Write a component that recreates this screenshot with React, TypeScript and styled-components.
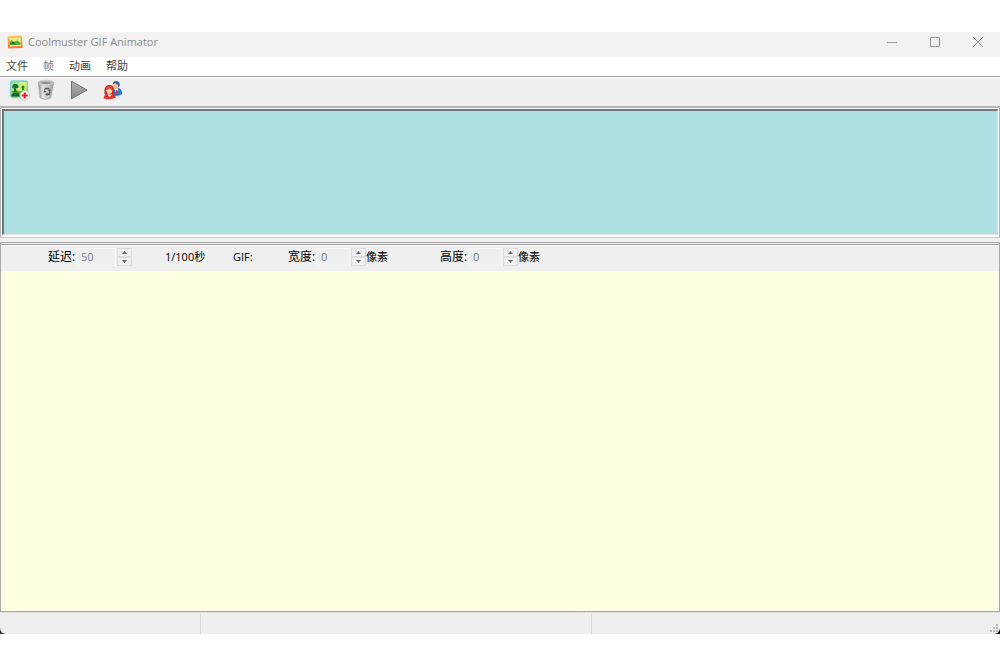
import React from "react";
import styled, { createGlobalStyle } from "styled-components";

const GlobalStyle = createGlobalStyle`
  * { box-sizing: border-box; }
  body {
    margin: 0;
    background: #fff;
    font-family: "Open Sans", "Noto Sans CJK SC", sans-serif;
    font-size: 11px;
    line-height: 16px;
    color: #000;
  }
  button, input { font: inherit; color: inherit; margin: 0; padding: 0; border: 0; background: none; }
`;

const Desktop = styled.div`
  min-height: 100vh;
  padding: 32px 0;
  display: flex;
  flex-direction: column;
`;

const Backdrop = styled.div`
  flex: 1;
  display: flex;
  background: linear-gradient(90deg, #3a3424, #000);
`;

const Window = styled.main`
  flex: 1;
  display: flex;
  flex-direction: column;
  background: #efefef;
  border-radius: 0 0 6px 6px;
  overflow: hidden;
`;

const TitleBar = styled.header`
  height: 25px;
  flex: none;
  display: flex;
  align-items: center;
  justify-content: space-between;
  background: #f2f2f2;
  color: #8c8c8c;
  padding: 0 1px 5px 7px;
`;

const Title = styled.h1`
  display: flex;
  align-items: center;
  gap: 5px;
  margin: 0;
  font-size: 11px;
  font-weight: 400;
`;

const WindowControls = styled.div`
  display: flex;
`;

const ControlButton = styled.button`
  width: 43px;
  height: 20px;
  display: flex;
  align-items: center;
  justify-content: center;
`;

const MenuBar = styled.nav`
  height: 19px;
  flex: none;
  display: flex;
  align-items: center;
  gap: 15px;
  padding: 0 0 2px 6px;
  background: #fff;
`;

const MenuItem = styled.button<{ $muted?: boolean }>`
  color: ${(p) => (p.$muted ? "#77778a" : "#444")};
`;

const ToolBar = styled.div`
  height: 30px;
  flex: none;
  display: flex;
  align-items: center;
  border-top: 1px solid #a0a0a0;
  box-shadow: inset 0 1px #fff;
  padding: 0 0 3px 8px;
`;

const ToolButton = styled.button<{ $gap?: number }>`
  display: flex;
  margin-right: ${(p) => p.$gap ?? 0}px;
`;

const FrameStrip = styled.section`
  height: 132px;
  flex: none;
  display: flex;
  border: 1px solid #b4b4b8;
  border-top-width: 2px;
  border-bottom: 1px solid #cbcbd0;
  background: #fff;
  padding: 1px 1px 2px;
`;

const Frames = styled.div`
  flex: 1;
  background: #addfe3;
  border: 2px solid #6e7677;
  border-right: 1px solid #e3e3e3;
  border-bottom: 1px solid #e3e3e3;
`;

const Editor = styled.section`
  flex: 1;
  display: flex;
  flex-direction: column;
  margin-top: 4px;
  border: 1px solid #a8a8ac;
`;

const Options = styled.form`
  height: 27px;
  flex: none;
  display: flex;
  align-items: center;
  border-top: 1px solid #a0a0a0;
  box-shadow: inset 0 1px #f8f8f8;
  margin-top: 1px;
  padding: 0 0 3px 47px;
`;

const Field = styled.div<{ $width: number }>`
  display: flex;
  align-items: center;
  width: ${(p) => p.$width}px;
`;

const FieldLabel = styled.label`
  width: 28px;
  font-size: 12px;
  white-space: nowrap;
`;

const NumberInput = styled.input<{ $width: number }>`
  width: ${(p) => p.$width}px;
  height: 18px;
  padding-left: 4px;
  border: 1px solid #f7f7f7;
  color: #7c7c7c;
  margin-right: 1px;
`;

const Spinner = styled.div`
  width: 15px;
  height: 18px;
  display: flex;
  flex-direction: column;
`;

const SpinButton = styled.button`
  flex: 1;
  display: flex;
  align-items: center;
  justify-content: center;
  border: 1px solid #dcdcdc;
`;

const Unit = styled.span<{ $width: number }>`
  width: ${(p) => p.$width}px;
  white-space: nowrap;
`;

const Canvas = styled.div`
  flex: 1;
  min-height: 120px;
  background: #ffffe1;
  border-right: 1px solid #fff;
`;

const StatusBar = styled.footer`
  height: 22px;
  flex: none;
  display: grid;
  grid-template-columns: 200fr 391fr 409fr;
  padding: 1px 0 0;
  border-top: 1px solid #e0e0e0;
`;

const StatusCell = styled.div`
  display: flex;
  justify-content: flex-end;
  align-items: flex-end;
  & + & { border-left: 1px solid #d9d9d9; }
`;

const AppIcon = () => (
  <svg width="16" height="14" viewBox="0 0 16 14" aria-hidden="true">
    <defs>
      <linearGradient id="frame" x2="0" y2="1">
        <stop stopColor="#ffc65c" />
        <stop offset="1" stopColor="#f4752b" />
      </linearGradient>
    </defs>
    <path d="M1.500 1.200 14 .5q1 0 1 1l.7 10.500q0 1-1 1L2 13.500q-1 0-1-1L.5 2.200q0-1 1-1z" fill="url(#frame)" />
    <path d="m2.500 3 11-.5.5 7.500-11 .5z" fill="#e6ef86" />
    <path d="M2.700 7.500 4.500 5 7 7l3-1.500 3.800 2.500.2 2-11 .5z" fill="#54a83c" />
    <path d="M3 9 6 6.500l3 2.500z" fill="#187b39" />
    <path d="m3 10.300 11-.5v1.300l-11 .5z" fill="#ffe28a" />
  </svg>
);

const AddImageIcon = () => (
  <svg width="22" height="22" viewBox="0 0 22 22" aria-hidden="true">
    <defs>
      <linearGradient id="scene" x2="1" y2="1">
        <stop stopColor="#75dfa3" />
        <stop offset=".5" stopColor="#dbf277" />
        <stop offset="1" stopColor="#8fd04a" />
      </linearGradient>
    </defs>
    <rect x="2.500" y="2" width="17" height="16.500" rx="2" fill="url(#scene)" stroke="#7ccfdc" strokeWidth="1.300" />
    <path d="M3.500 12q5-1.500 8 0 4-1 7.500 0v5.500H3.500z" fill="#62b62a" />
    <path d="M6 12V9.500Q3.500 9 4.500 7 4.500 4.500 7 5q3-.5 3.500 2 .5 2.500-2.500 2.500V12l2 1H5z" fill="#1d7030" />
    <path d="M14 11V9.500q-1.500-2 .7-3 2.600 0 1.300 3V11z" fill="#2d8530" />
    <path d="M3.500 15.500q3-3 7-1.500l1.500 3.500H3.500z" fill="#17642a" />
    <circle cx="16.700" cy="16.500" r="4.700" fill="#fff" stroke="#b5bbc2" strokeWidth=".8" />
    <path d="M16.700 13.500v6M13.700 16.500h6" stroke="#ef1720" strokeWidth="2" />
  </svg>
);

const TrashIcon = () => (
  <svg width="18" height="22" viewBox="0 0 18 22" aria-hidden="true">
    <defs>
      <linearGradient id="bin">
        <stop stopColor="#8a8a8a" />
        <stop offset=".3" stopColor="#e2e2e2" />
        <stop offset=".7" stopColor="#c4c4c4" />
        <stop offset="1" stopColor="#8c8c8c" />
      </linearGradient>
    </defs>
    <path d="m1.200 3.500 2 15.500q5.500 3 10.500 0l3-15.500z" fill="url(#bin)" stroke="#a5a5a5" strokeWidth=".7" />
    <ellipse cx="9" cy="3.500" rx="7.800" ry="2.300" fill="#b5b5b5" stroke="#d2d2d2" />
    <path d="M3.500 4Q9 1.800 14.500 4 9 5.800 3.500 4z" fill="#8e8e8e" />
    <path d="m7.500 10.500 1-1h3l.8 1.500M13 13l-1 2.500h-2" fill="none" stroke="#555" strokeWidth="1.300" />
    <path d="m10.800 11.500 3-.8-.8 2.300zM10.500 13.800l-2.500 1.500 2.500 1.700zM6.300 13.500l1.200-2.500 2 2z" fill="#555" />
  </svg>
);

const PlayIcon = () => (
  <svg width="18" height="20" viewBox="0 0 18 20" aria-hidden="true">
    <defs>
      <linearGradient id="play" x2="0" y2="1">
        <stop stopColor="#b4b4b4" />
        <stop offset="1" stopColor="#858585" />
      </linearGradient>
    </defs>
    <path d="M1.500 1.200 17 10 1.500 18.800z" fill="url(#play)" stroke="#727272" strokeLinejoin="round" />
  </svg>
);

const UsersIcon = () => (
  <svg width="20" height="20" viewBox="0 0 20 20" aria-hidden="true">
    <path d="M9.500 15.500q-1-5 2.500-6.500l4-1q3 1 3.200 6-4 3-9.700 1.500z" fill="#2d78d6" />
    <path d="m11.500 9 1.500 5 2.500-5.500z" fill="#fff" />
    <path d="M12.800 10h1l.5 3-1 1.500-1-1.500z" fill="#ce3028" />
    <ellipse cx="12.500" cy="5.500" rx="2.900" ry="3.800" fill="#f8bd93" />
    <path d="M9.700 4Q10.500.8 13.500 1q3.700.5 3.200 4.500L15.300 8Q15.500 4 12.500 3.200z" fill="#315b9e" />
    <path d="M1.500 13.500Q.5 6 5.500 5q5.500-.5 5.500 5.500l.5 4-3 1.500H3z" fill="#c22b20" />
    <ellipse cx="6.200" cy="10.200" rx="3" ry="3.700" fill="#ffd5b5" />
    <path d="M2.800 10Q3 5.500 6.500 6q3.500.5 3 4.500Q7.500 10 7 8.300 5.500 10 2.800 10z" fill="#dd4634" />
    <path d="M.7 18.300q0-3.500 3.600-4.300l2.200 1.500L9.300 14q3.200.7 3.500 3.700-6 2.600-12.100.6z" fill="#e5322c" />
    <path d="m4.300 14 2.300 3.200L9.200 14q-2.500 1-4.900 0z" fill="#fff0e8" />
  </svg>
);

function SpinButtons({ name }: { name: string }) {
  return (
    <Spinner>
      <SpinButton type="button" disabled aria-label={`${name} +`}>
        <svg width="5" height="3" viewBox="0 0 5 3"><path d="M0 3 2.500 0 5 3z" fill="#666" /></svg>
      </SpinButton>
      <SpinButton type="button" disabled aria-label={`${name} -`}>
        <svg width="5" height="3" viewBox="0 0 5 3"><path d="M0 0 2.500 3 5 0z" fill="#666" /></svg>
      </SpinButton>
    </Spinner>
  );
}

interface NumberFieldProps {
  id: string;
  label: string;
  value: string;
  inputWidth: number;
  unit?: string;
  width: number;
}

function NumberField({ id, label, value, inputWidth, unit, width }: NumberFieldProps) {
  return (
    <Field $width={width}>
      <FieldLabel htmlFor={id}>{label}:</FieldLabel>
      <NumberInput id={id} $width={inputWidth} defaultValue={value} disabled />
      <SpinButtons name={label} />
      {unit && <Unit $width={24}>{unit}</Unit>}
    </Field>
  );
}

export default function App() {
  return (
    <Desktop>
      <GlobalStyle />
      <Backdrop>
        <Window>
          <TitleBar>
            <Title><AppIcon />Coolmuster GIF Animator</Title>
            <WindowControls>
              <ControlButton aria-label="最小化">
                <svg width="10" height="10" viewBox="0 0 10 10"><path d="M0 5.500h10" stroke="#a0a0a0" /></svg>
              </ControlButton>
              <ControlButton aria-label="最大化">
                <svg width="10" height="10" viewBox="0 0 10 10"><rect x=".5" y=".5" width="9" height="9" rx=".5" fill="none" stroke="#929292" /></svg>
              </ControlButton>
              <ControlButton aria-label="关闭">
                <svg width="10" height="10" viewBox="0 0 10 10"><path d="m0 0 10 10M10 0 0 10" stroke="#929292" /></svg>
              </ControlButton>
            </WindowControls>
          </TitleBar>
          <MenuBar>
            <MenuItem>文件</MenuItem>
            <MenuItem $muted>帧</MenuItem>
            <MenuItem>动画</MenuItem>
            <MenuItem>帮助</MenuItem>
          </MenuBar>
          <ToolBar>
            <ToolButton aria-label="添加图片" $gap={7}><AddImageIcon /></ToolButton>
            <ToolButton aria-label="删除" $gap={15}><TrashIcon /></ToolButton>
            <ToolButton aria-label="播放" $gap={15}><PlayIcon /></ToolButton>
            <ToolButton aria-label="用户"><UsersIcon /></ToolButton>
          </ToolBar>
          <FrameStrip><Frames /></FrameStrip>
          <Editor>
            <Options>
              <NumberField id="delay" label="延迟" value="50" inputWidth={40} width={117} />
              <Unit $width={68}>1/100秒</Unit>
              <Unit $width={55}>GIF:</Unit>
              <NumberField id="width" label="宽度" value="0" inputWidth={34} unit="像素" width={152} />
              <NumberField id="height" label="高度" value="0" inputWidth={34} unit="像素" width={152} />
            </Options>
            <Canvas />
          </Editor>
          <StatusBar>
            <StatusCell />
            <StatusCell />
            <StatusCell>
              <svg width="10" height="10" viewBox="0 0 10 10" aria-hidden="true">
                <path d="M6 0h2v2H6zM3 3h2v2H3zM6 3h2v2H6zM0 6h2v2H0zM3 6h2v2H3zM6 6h2v2H6z" fill="#b8b8b8" />
              </svg>
            </StatusCell>
          </StatusBar>
        </Window>
      </Backdrop>
    </Desktop>
  );
}
